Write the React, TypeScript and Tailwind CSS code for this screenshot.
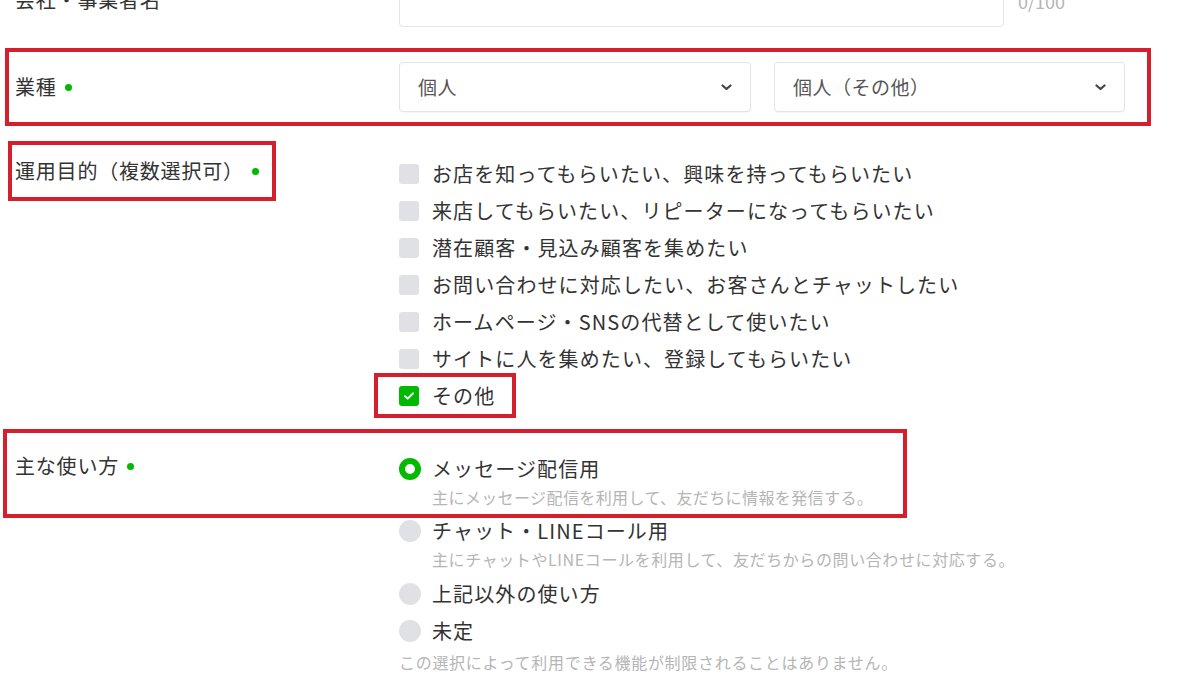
import React from "react"

const RED = "border-[#d61f2c]"

function Dot() {
  return <span className="ml-[8px] inline-block w-[7px] h-[7px] rounded-full bg-[#00b900]" />
}

function Chevron() {
  return (
    <svg width="11" height="7" viewBox="0 0 11 7" className="text-[#444]">
      <path d="M1.5 1.5 L5.5 5 L9.5 1.5" fill="none" stroke="currentColor" strokeWidth="2.2" strokeLinecap="round" strokeLinejoin="round" />
    </svg>
  )
}

function Select({ value, width }: { value: string; width: string }) {
  return (
    <div className={`${width} h-[50px] flex items-center justify-between pl-[18px] pr-[18px] border border-[#e4e4e4] rounded-[4px] bg-white shadow-[0_1px_1px_rgba(0,0,0,0.04)]`}>
      <span className="text-[19px] text-[#555] tracking-[0.5px]">{value}</span>
      <Chevron />
    </div>
  )
}

function Checkbox({ checked = false }: { checked?: boolean }) {
  if (checked) {
    return (
      <span className="w-[20px] h-[20px] rounded-[3px] bg-[#00b900] flex items-center justify-center shrink-0">
        <svg width="12" height="10" viewBox="0 0 12 10">
          <path d="M2 5.2 L4.7 7.6 L10 2.4" fill="none" stroke="white" strokeWidth="2" strokeLinecap="round" strokeLinejoin="round" />
        </svg>
      </span>
    )
  }
  return <span className="w-[20px] h-[20px] rounded-[3px] bg-[#dfe1e5] shrink-0" />
}

function Radio({ checked = false }: { checked?: boolean }) {
  if (checked) {
    return <span className="w-[22px] h-[22px] rounded-full border-[6px] border-[#00b900] bg-white shrink-0" />
  }
  return <span className="w-[22px] h-[22px] rounded-full bg-[#dfe1e5] shrink-0" />
}

const purposes = [
  "お店を知ってもらいたい、興味を持ってもらいたい",
  "来店してもらいたい、リピーターになってもらいたい",
  "潜在顧客・見込み顧客を集めたい",
  "お問い合わせに対応したい、お客さんとチャットしたい",
  "ホームページ・SNSの代替として使いたい",
  "サイトに人を集めたい、登録してもらいたい",
]

export default function App() {
  return (
    <div className="w-[1200px] h-[687px] overflow-hidden bg-white text-[#333] font-['Noto_Sans_CJK_JP','Noto_Sans',sans-serif]">
      <div className="-mt-[21px]">
        {/* 会社・事業者名 */}
        <div className="flex items-center h-[48px]">
          <div className="w-[399px] shrink-0 pl-[15px] text-[20px] tracking-[0.8px] -mt-[6px]">会社・事業者名</div>
          <div className="w-[605px] h-[48px] border border-[#e4e4e4] rounded-[4px]" />
          <div className="ml-[14px] text-[18px] text-[#b5b5b5] -mt-[4px]">0/100</div>
        </div>

        {/* 業種 */}
        <div className={`mt-[21px] ml-[5px] w-[1146px] h-[78px] border-4 ${RED} flex items-center`}>
          <div className="w-[390px] shrink-0 pl-[6px] flex items-center text-[20px] tracking-[0.8px]">
            業種
            <Dot />
          </div>
          <div className="flex gap-[23px]">
            <Select value="個人" width="w-[352px]" />
            <Select value="個人（その他）" width="w-[351px]" />
          </div>
        </div>

        {/* 運用目的 */}
        <div className="mt-[15px] flex">
          <div className="w-[399px] shrink-0">
            <div className={`ml-[8px] w-[268px] h-[60px] border-4 ${RED} flex items-center pl-[3px] text-[20px] tracking-[0.8px]`}>
              運用目的（複数選択可）
              <Dot />
            </div>
          </div>
          <div className="pt-[14px] flex flex-col text-[20px] tracking-[1.1px]">
            {purposes.map((p) => (
              <div key={p} className="h-[37px] flex items-center">
                <Checkbox />
                <span className="ml-[13px]">{p}</span>
              </div>
            ))}
            <div className={`h-[45px] -my-[4px] -ml-[25px] w-[142px] border-4 ${RED} flex items-center pl-[21px]`}>
              <Checkbox checked />
              <span className="ml-[13px]">その他</span>
            </div>
          </div>
        </div>

        {/* 主な使い方 */}
        <div className={`mt-[15px] ml-[3px] w-[904px] h-[89px] border-4 ${RED} flex`}>
          <div className="w-[392px] shrink-0 pl-[8px] pt-[18px]">
            <div className="h-[30px] flex items-center text-[20px] tracking-[0.8px]">
              主な使い方
              <Dot />
            </div>
          </div>
          <div className="pt-[17px]">
            <div className="h-[37px] flex items-center text-[20px] tracking-[1.1px]">
              <Radio checked />
              <span className="ml-[11px]">メッセージ配信用</span>
            </div>
            <div className="h-[20px] leading-[20px] pl-[33px] text-[16px] tracking-[0.4px] text-[#b5b5b5]">
              主にメッセージ配信を利用して、友だちに情報を発信する。
            </div>
          </div>
        </div>

        <div className="flex -mt-[1px]">
          <div className="w-[399px] shrink-0" />
          <div className="flex flex-col text-[20px] tracking-[1.1px]">
            <div className="h-[28px] flex items-center">
              <Radio />
              <span className="ml-[11px]">チャット・LINEコール用</span>
            </div>
            <div className="h-[28px] flex items-center pl-[33px] text-[16px] tracking-[0.6px] text-[#b5b5b5]">
              主にチャットやLINEコールを利用して、友だちからの問い合わせに対応する。
            </div>
            <div className="mt-[2px] h-[37px] flex items-center">
              <Radio />
              <span className="ml-[11px]">上記以外の使い方</span>
            </div>
            <div className="h-[37px] flex items-center">
              <Radio />
              <span className="ml-[11px]">未定</span>
            </div>
            <div className="h-[26px] flex items-center text-[16px] tracking-[0.7px] text-[#b5b5b5]">
              この選択によって利用できる機能が制限されることはありません。
            </div>
          </div>
        </div>
      </div>
    </div>
  )
}
